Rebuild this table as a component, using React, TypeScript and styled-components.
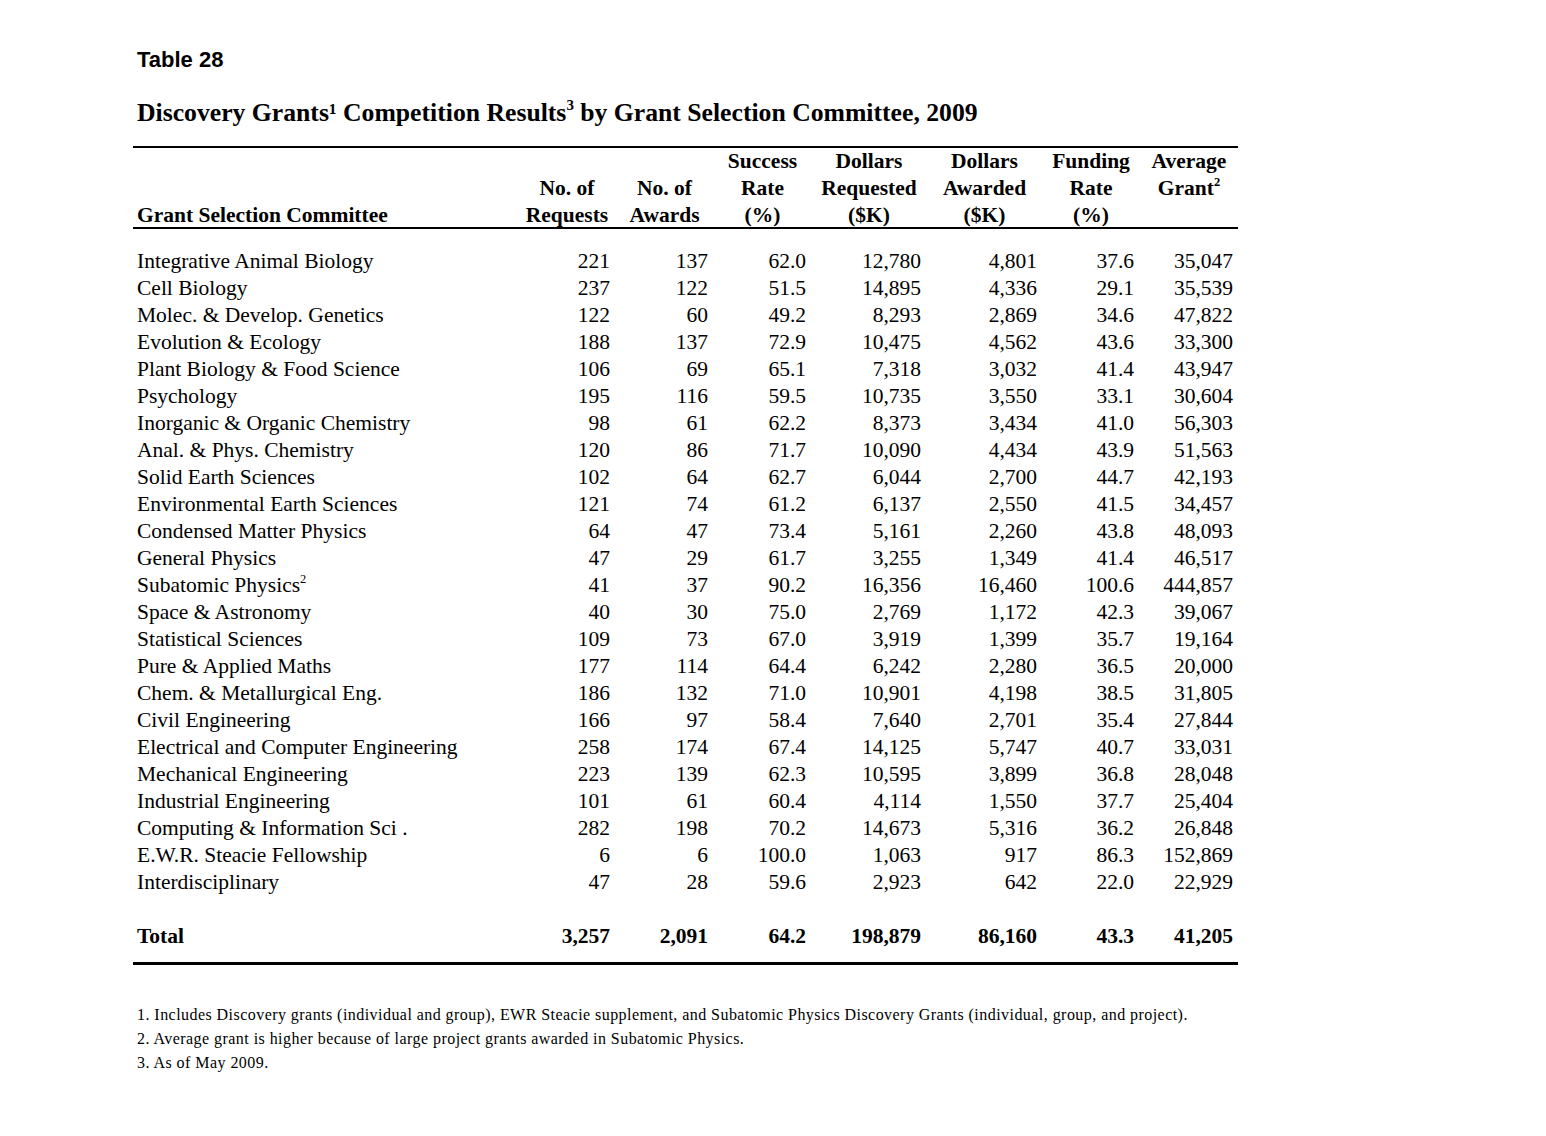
import React from "react";
import styled, { createGlobalStyle } from "styled-components";

const Global = createGlobalStyle`
  html, body { margin: 0; padding: 0; background: #ffffff; }
  body { color: #000; font-family: "Liberation Serif", "Times New Roman", serif; }
`;

const Page = styled.div`
  width: 1546px;
  min-height: 1136px;
  box-sizing: border-box;
  padding: 48px 0 0 133px;
`;

const Label = styled.div`
  font-family: "Liberation Sans", Arial, sans-serif;
  font-weight: bold;
  font-size: 22px;
  line-height: 24px;
  padding-left: 4px;
`;

const Title = styled.h1`
  margin: 26px 0 0 0;
  padding-left: 4px;
  font-family: "Liberation Serif", "Times New Roman", serif;
  font-weight: bold;
  font-size: 25.7px;
  line-height: 30px;
`;

const Sup = styled.sup`
  font-size: 0.58em;
  line-height: 0;
  vertical-align: 0.75em;
`;

const Table = styled.div`
  margin-top: 18px;
  width: 1105px;
  border-top: 2px solid #000;
  border-bottom: 3px solid #000;
  padding-bottom: 12px;
`;

const cols = "376px 86px 87px 87px 104px 105px 86px 88px";

const HeadRow = styled.div`
  display: grid;
  grid-template-columns: ${cols};
  column-gap: 11px;
  padding: 0 5px 0 4px;
  border-bottom: 2px solid #000;
  font-weight: bold;
  font-size: 21.5px;
  line-height: 27px;
  margin-bottom: -1px;
`;

const HeadCell = styled.div<{ $left?: boolean }>`
  display: flex;
  flex-direction: column;
  text-align: ${(p) => (p.$left ? "left" : "center")};
  white-space: nowrap;
`;

const HeadLine = styled.div`
  height: 27px;
  &:last-child { height: 25px; }
`;

const Body = styled.div`
  padding-top: 20px;
`;

const Row = styled.div<{ $bold?: boolean; $gapTop?: boolean }>`
  display: grid;
  grid-template-columns: ${cols};
  column-gap: 11px;
  padding: 0 5px 0 4px;
  font-size: 21.5px;
  line-height: 27px;
  font-weight: ${(p) => (p.$bold ? "bold" : "normal")};
  margin-top: ${(p) => (p.$gapTop ? "27px" : "0")};
`;

const NameCell = styled.div`
  white-space: nowrap;
`;

const Num = styled.div`
  text-align: right;
  white-space: nowrap;
`;

const Notes = styled.div`
  margin-top: 38px;
  padding-left: 4px;
  font-size: 16px;
  letter-spacing: 0.45px;
  line-height: 24px;
  white-space: nowrap;
`;

type HeadDef = { lines: React.ReactNode[]; left?: boolean };

const heads: HeadDef[] = [
  { lines: ["", "", "Grant Selection Committee"], left: true },
  { lines: ["", "No. of", "Requests"] },
  { lines: ["", "No. of", "Awards"] },
  { lines: ["Success", "Rate", "(%)"] },
  { lines: ["Dollars", "Requested", "($K)"] },
  { lines: ["Dollars", "Awarded", "($K)"] },
  { lines: ["Funding", "Rate", "(%)"] },
  {
    lines: [
      "Average",
      <>
        Grant<Sup>2</Sup>
      </>,
      "",
    ],
  },
];

type RowDef = [React.ReactNode, string, string, string, string, string, string, string];

const rows: RowDef[] = [
  ["Integrative Animal Biology", "221", "137", "62.0", "12,780", "4,801", "37.6", "35,047"],
  ["Cell Biology", "237", "122", "51.5", "14,895", "4,336", "29.1", "35,539"],
  ["Molec. & Develop. Genetics", "122", "60", "49.2", "8,293", "2,869", "34.6", "47,822"],
  ["Evolution & Ecology", "188", "137", "72.9", "10,475", "4,562", "43.6", "33,300"],
  ["Plant Biology & Food Science", "106", "69", "65.1", "7,318", "3,032", "41.4", "43,947"],
  ["Psychology", "195", "116", "59.5", "10,735", "3,550", "33.1", "30,604"],
  ["Inorganic & Organic Chemistry", "98", "61", "62.2", "8,373", "3,434", "41.0", "56,303"],
  ["Anal. & Phys. Chemistry", "120", "86", "71.7", "10,090", "4,434", "43.9", "51,563"],
  ["Solid Earth Sciences", "102", "64", "62.7", "6,044", "2,700", "44.7", "42,193"],
  ["Environmental Earth Sciences", "121", "74", "61.2", "6,137", "2,550", "41.5", "34,457"],
  ["Condensed Matter Physics", "64", "47", "73.4", "5,161", "2,260", "43.8", "48,093"],
  ["General Physics", "47", "29", "61.7", "3,255", "1,349", "41.4", "46,517"],
  [
    <>
      Subatomic Physics<Sup>2</Sup>
    </>,
    "41", "37", "90.2", "16,356", "16,460", "100.6", "444,857",
  ],
  ["Space & Astronomy", "40", "30", "75.0", "2,769", "1,172", "42.3", "39,067"],
  ["Statistical Sciences", "109", "73", "67.0", "3,919", "1,399", "35.7", "19,164"],
  ["Pure & Applied Maths", "177", "114", "64.4", "6,242", "2,280", "36.5", "20,000"],
  ["Chem. & Metallurgical Eng.", "186", "132", "71.0", "10,901", "4,198", "38.5", "31,805"],
  ["Civil Engineering", "166", "97", "58.4", "7,640", "2,701", "35.4", "27,844"],
  ["Electrical and Computer Engineering", "258", "174", "67.4", "14,125", "5,747", "40.7", "33,031"],
  ["Mechanical Engineering", "223", "139", "62.3", "10,595", "3,899", "36.8", "28,048"],
  ["Industrial Engineering", "101", "61", "60.4", "4,114", "1,550", "37.7", "25,404"],
  ["Computing & Information Sci .", "282", "198", "70.2", "14,673", "5,316", "36.2", "26,848"],
  ["E.W.R. Steacie Fellowship", "6", "6", "100.0", "1,063", "917", "86.3", "152,869"],
  ["Interdisciplinary", "47", "28", "59.6", "2,923", "642", "22.0", "22,929"],
];

const total: RowDef = ["Total", "3,257", "2,091", "64.2", "198,879", "86,160", "43.3", "41,205"];

const notes = [
  "1. Includes Discovery grants (individual and group), EWR Steacie supplement, and Subatomic Physics Discovery Grants (individual, group, and project).",
  "2. Average grant is higher because of large project grants awarded in Subatomic Physics.",
  "3. As of May 2009.",
];

const DataRow: React.FC<{ r: RowDef; bold?: boolean; gapTop?: boolean }> = ({ r, bold, gapTop }) => (
  <Row $bold={bold} $gapTop={gapTop}>
    <NameCell>{r[0]}</NameCell>
    {r.slice(1).map((v, i) => (
      <Num key={i}>{v}</Num>
    ))}
  </Row>
);

export default function App() {
  return (
    <Page>
      <Global />
      <Label>Table 28</Label>
      <Title>
        Discovery Grants¹ Competition Results<Sup>3</Sup> by Grant Selection Committee, 2009
      </Title>
      <Table>
        <HeadRow>
          {heads.map((h, i) => (
            <HeadCell key={i} $left={h.left}>
              {h.lines.map((l, j) => (
                <HeadLine key={j}>{l}</HeadLine>
              ))}
            </HeadCell>
          ))}
        </HeadRow>
        <Body>
          {rows.map((r, i) => (
            <DataRow key={i} r={r} />
          ))}
          <DataRow r={total} bold gapTop />
        </Body>
      </Table>
      <Notes>
        {notes.map((n, i) => (
          <div key={i}>{n}</div>
        ))}
      </Notes>
    </Page>
  );
}
